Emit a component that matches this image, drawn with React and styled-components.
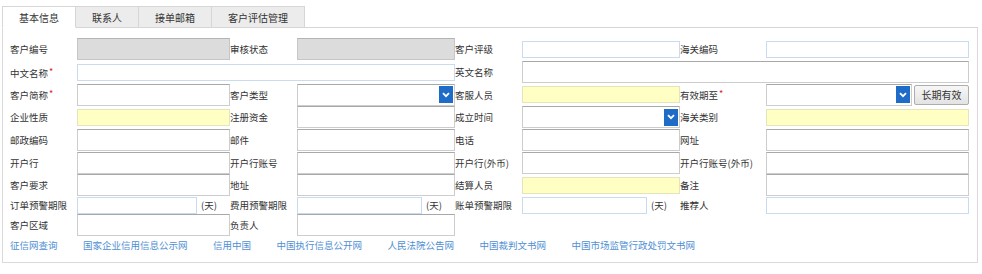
import React from 'react'
import styled, { createGlobalStyle, css } from 'styled-components'

const GlobalStyle = createGlobalStyle`
  body {
    margin: 0;
    background: #ffffff;
    font-family: "Noto Sans CJK SC", "Noto Sans", sans-serif;
    color: #333333;
  }
`

const Page = styled.div`
  padding: 6px 4px 0 2px;
`

const TabBar = styled.div`
  display: flex;
  align-items: flex-end;
  height: 21px;
  border-bottom: 1px solid #d6d6d6;
`

const Tab = styled.div`
  box-sizing: border-box;
  height: 22px;
  margin-bottom: -1px;
  padding: 0 16px;
  display: flex;
  align-items: center;
  font-size: 10px;
  color: #333;
  background: ${p => (p.$active ? '#ffffff' : '#ececec')};
  border: 1px solid #d6d6d6;
  border-bottom-color: ${p => (p.$active ? '#ffffff' : '#d6d6d6')};
  & + & {
    border-left: none;
  }
`

const Panel = styled.div`
  border: 1px solid #dadada;
  border-top: none;
  padding: 10px 8px 9px 7px;
`

const FormGrid = styled.div`
  display: grid;
  grid-template-columns: 67px 153px 67px 158px 67px 158px 86px 203px;
  grid-template-rows: repeat(7, 22.7px) 17px 22px;
  align-items: center;
  font-size: 9.5px;
`

const Label = styled.div`
  white-space: nowrap;
  line-height: 14px;
`

const Star = styled.span`
  color: #e02020;
  font-size: 9px;
  vertical-align: 2px;
  margin-left: 1px;
`

const fieldKinds = {
  plain: css`
    height: 22px;
    background: #fff;
    border: 1px solid #cdcdcd;
    border-top-color: #a8a8a8;
  `,
  ro: css`
    height: 22px;
    background: #dcdcdc;
    border: 1px solid #c6c6c6;
    border-top-color: #b4b4b4;
  `,
  blue: css`
    height: 17px;
    background: #fff;
    border: 1px solid #c8dbf1;
  `,
  yellow: css`
    height: 17px;
    background: #ffffc4;
    border: 1px solid #e3e6bd;
  `,
}

const Field = styled.div`
  box-sizing: border-box;
  min-width: 0;
  grid-column: span ${p => p.$span || 1};
  ${p => p.$grow && 'flex: 1;'}
  ${p => fieldKinds[p.$kind || 'plain']}
`

const SelectBox = styled(Field)`
  display: flex;
  justify-content: flex-end;
  align-items: center;
  padding-right: 1px;
`

const ArrowBox = styled.div`
  width: 14px;
  height: 17px;
  background: #1e6cc8;
  display: flex;
  align-items: center;
  justify-content: center;
`

const Combo = styled.div`
  display: flex;
  align-items: center;
  gap: 2px;
  min-width: 0;
`

const LongButton = styled.button`
  box-sizing: border-box;
  width: 55px;
  height: 20px;
  padding: 0;
  font-family: inherit;
  font-size: 10px;
  color: #333;
  background: linear-gradient(#f7f7f7, #e3e3e3);
  border: 1px solid #adadad;
  border-radius: 2px;
`

const Unit = styled.span`
  width: 31px;
  flex: none;
  padding-left: 2px;
  box-sizing: border-box;
  white-space: nowrap;
`

const Links = styled.div`
  display: flex;
  gap: 25.5px;
  margin-top: 1px;
  font-size: 9.5px;
  line-height: 16px;
`

const LinkItem = styled.a`
  color: #4f8fd4;
  text-decoration: none;
  white-space: nowrap;
`

const Chevron = () => (
  <svg width="8" height="6" viewBox="0 0 8 6">
    <path d="M1 1.2 L4 4.2 L7 1.2" fill="none" stroke="#fff" strokeWidth="1.8" />
  </svg>
)

const Select = ({ grow }) => (
  <SelectBox $grow={grow}>
    <ArrowBox>
      <Chevron />
    </ArrowBox>
  </SelectBox>
)

const DaysField = ({ kind }) => (
  <Combo>
    <Field $kind={kind} $grow />
    <Unit>(天)</Unit>
  </Combo>
)

const L = ({ children, req }) => (
  <Label>
    {children}
    {req && <Star>*</Star>}
  </Label>
)

const links = [
  '征信网查询',
  '国家企业信用信息公示网',
  '信用中国',
  '中国执行信息公开网',
  '人民法院公告网',
  '中国裁判文书网',
  '中国市场监管行政处罚文书网',
]

const App = () => (
  <Page>
    <GlobalStyle />
    <TabBar>
      <Tab $active>基本信息</Tab>
      <Tab>联系人</Tab>
      <Tab>接单邮箱</Tab>
      <Tab>客户评估管理</Tab>
    </TabBar>
    <Panel>
      <FormGrid>
        <L>客户编号</L>
        <Field $kind="ro" />
        <L>审核状态</L>
        <Field $kind="ro" />
        <L>客户评级</L>
        <Field $kind="blue" />
        <L>海关编码</L>
        <Field $kind="blue" />

        <L req>中文名称</L>
        <Field $kind="blue" $span={3} />
        <L>英文名称</L>
        <Field $span={3} />

        <L req>客户简称</L>
        <Field />
        <L>客户类型</L>
        <Select />
        <L>客服人员</L>
        <Field $kind="yellow" />
        <L req>有效期至</L>
        <Combo>
          <Select grow />
          <LongButton>长期有效</LongButton>
        </Combo>

        <L>企业性质</L>
        <Field $kind="yellow" />
        <L>注册资金</L>
        <Field />
        <L>成立时间</L>
        <Select />
        <L>海关类别</L>
        <Field $kind="yellow" />

        <L>邮政编码</L>
        <Field />
        <L>邮件</L>
        <Field />
        <L>电话</L>
        <Field />
        <L>网址</L>
        <Field />

        <L>开户行</L>
        <Field />
        <L>开户行账号</L>
        <Field />
        <L>开户行(外币)</L>
        <Field />
        <L>开户行账号(外币)</L>
        <Field />

        <L>客户要求</L>
        <Field />
        <L>地址</L>
        <Field />
        <L>结算人员</L>
        <Field $kind="yellow" />
        <L>备注</L>
        <Field />

        <L>订单预警期限</L>
        <DaysField kind="blue" />
        <L>费用预警期限</L>
        <DaysField kind="blue" />
        <L>账单预警期限</L>
        <DaysField kind="blue" />
        <L>推荐人</L>
        <Field $kind="blue" />

        <L>客户区域</L>
        <Field />
        <L>负责人</L>
        <Field />
      </FormGrid>
      <Links>
        {links.map(t => (
          <LinkItem key={t} href="#">{t}</LinkItem>
        ))}
      </Links>
    </Panel>
  </Page>
)

export default App
